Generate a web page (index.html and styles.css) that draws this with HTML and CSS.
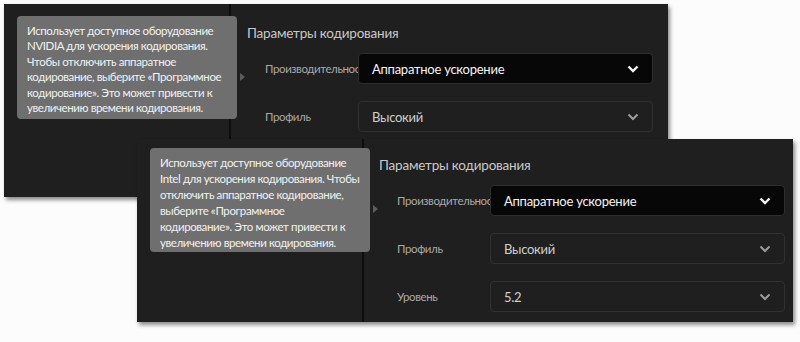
FILE: index.html
```html
<!DOCTYPE html>
<html lang="ru">
<head>
<meta charset="utf-8">
<title>Параметры кодирования</title>
<link rel="stylesheet" href="styles.css">
</head>
<body>
<div class="canvas">
  <section class="panel panel-nvidia">
    <aside class="sidebar"></aside>
    <div class="divider"></div>
    <div class="content">
      <h2 class="heading">Параметры кодирования</h2>
      <div class="rows">
        <div class="row">
          <span class="label">Производительность</span>
          <div class="select select-active"><span>Аппаратное ускорение</span><svg class="chev" viewBox="0 0 12 8"><path d="M1.5 1.5 L6 6 L10.5 1.5"/></svg></div>
        </div>
        <div class="row">
          <span class="label">Профиль</span>
          <div class="select"><span>Высокий</span><svg class="chev" viewBox="0 0 12 8"><path d="M1.5 1.5 L6 6 L10.5 1.5"/></svg></div>
        </div>
      </div>
    </div>
    <div class="tooltip">
      <p>Использует доступное оборудование<br>NVIDIA для ускорения кодирования.<br>Чтобы отключить аппаратное<br>кодирование, выберите «Программное<br>кодирование». Это может привести к<br>увеличению времени кодирования.</p>
      <span class="tip-arrow"></span>
    </div>
  </section>

  <section class="panel panel-intel">
    <aside class="sidebar"></aside>
    <div class="divider"></div>
    <div class="content">
      <h2 class="heading">Параметры кодирования</h2>
      <div class="rows">
        <div class="row">
          <span class="label">Производительность</span>
          <div class="select select-active"><span>Аппаратное ускорение</span><svg class="chev" viewBox="0 0 12 8"><path d="M1.5 1.5 L6 6 L10.5 1.5"/></svg></div>
        </div>
        <div class="row">
          <span class="label">Профиль</span>
          <div class="select"><span>Высокий</span><svg class="chev" viewBox="0 0 12 8"><path d="M1.5 1.5 L6 6 L10.5 1.5"/></svg></div>
        </div>
        <div class="row">
          <span class="label">Уровень</span>
          <div class="select"><span>5.2</span><svg class="chev" viewBox="0 0 12 8"><path d="M1.5 1.5 L6 6 L10.5 1.5"/></svg></div>
        </div>
      </div>
    </div>
    <div class="tooltip">
      <p>Использует доступное оборудование<br>Intel для ускорения кодирования. Чтобы<br>отключить аппаратное кодирование,<br>выберите «Программное<br>кодирование». Это может привести к<br>увеличению времени кодирования.</p>
      <span class="tip-arrow"></span>
    </div>
  </section>
</div>
</body>
</html>
```
FILE: styles.css
```css
* { box-sizing: border-box; }
html, body {
  margin: 0;
  padding: 0;
  background: #fdfcfd;
  width: 800px;
  height: 342px;
  overflow: hidden;
  font-family: Lato, "Liberation Sans", sans-serif;
}
.canvas {
  position: relative;
  width: 800px;
  height: 342px;
}
.panel {
  position: absolute;
  display: grid;
  grid-template-columns: 225px 2px 1fr;
  background: #1f1f1f;
  box-shadow: 2px 3px 4px rgba(0, 0, 0, 0.45);
}
.panel-nvidia {
  left: 4px;
  top: 4px;
  width: 664px;
  height: 193px;
}
.panel-intel {
  left: 137px;
  top: 139px;
  width: 656px;
  height: 183px;
}
.divider {
  background: #0d0d0d;
}
.content {
  padding: 17px 0 0 15px;
}
.panel-nvidia .content {
  padding-top: 20px;
  padding-left: 16px;
}
.heading {
  margin: 0;
  font-size: 13.5px;
  font-weight: 400;
  letter-spacing: -0.2px;
  line-height: 18px;
  color: #c9c9c9;
  white-space: nowrap;
}
.rows {
  display: flex;
  flex-direction: column;
  gap: 17px;
  margin-top: 11px;
}
.row {
  display: flex;
  align-items: center;
  padding-left: 18px;
}
.label {
  width: 93px;
  flex: none;
  overflow: hidden;
  white-space: nowrap;
  font-size: 11.5px;
  letter-spacing: -0.4px;
  color: #a9a9a9;
}
.select {
  width: 295px;
  height: 31px;
  flex: none;
  display: flex;
  align-items: center;
  justify-content: space-between;
  padding: 0 13px 0 13px;
  border: 1px solid #313131;
  border-radius: 4px;
  background: #1f1f1f;
  color: #cfcfcf;
  font-size: 13px;
  letter-spacing: -0.25px;
}
.select-active {
  background: #070707;
  color: #f4f4f4;
  border-color: #2e2e2e;
}
.chev {
  width: 12px;
  height: 8px;
  fill: none;
  stroke: #9c9c9c;
  stroke-width: 2;
}
.select-active .chev {
  stroke: #f2f2f2;
  stroke-width: 2.4;
}
.tooltip {
  position: absolute;
  left: 13px;
  top: 12px;
  width: 220px;
  height: 103px;
  padding: 7px 10px;
  background: #6f6f6f;
  border-radius: 4px;
  color: #f2f2f2;
}
.panel-intel .tooltip {
  top: 9px;
  height: 104px;
}
.tooltip p {
  margin: 0;
  font-size: 11.5px;
  line-height: 15.4px;
  white-space: nowrap;
  letter-spacing: -0.4px;
}
.panel-intel .tooltip p {
  line-height: 16px;
}
.tip-arrow {
  position: absolute;
  left: 223px;
  top: 57px;
  width: 0;
  height: 0;
  border-top: 4px solid transparent;
  border-bottom: 4px solid transparent;
  border-left: 5px solid #5c5c5c;
}
```
